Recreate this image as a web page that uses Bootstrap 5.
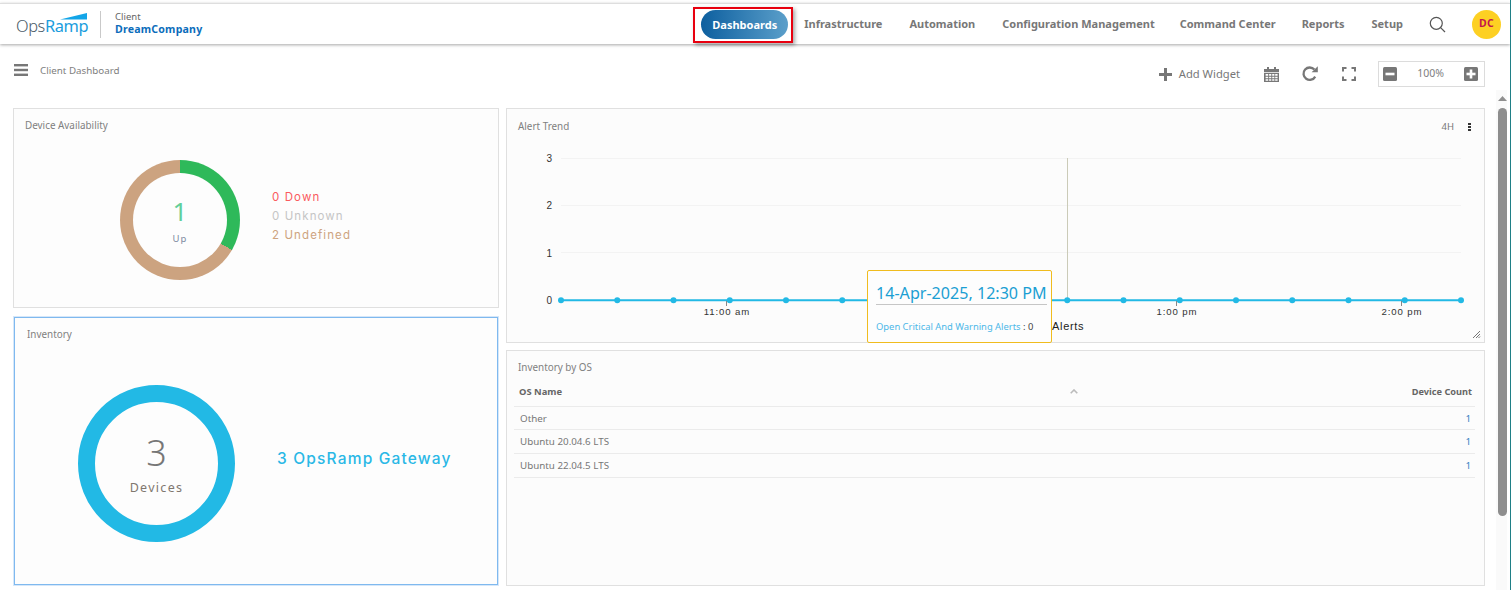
<!DOCTYPE html>
<html lang="en">
<head>
  <meta charset="UTF-8" />
  <title>Client Dashboard</title>
  <link href="https://cdn.jsdelivr.net/npm/bootstrap@5.3.0/dist/css/bootstrap.min.css" rel="stylesheet" />
  <style>
    html, body { height: 100%; }
    body {
      overflow: hidden;
      background: #fff;
      font-family: "Noto Sans", sans-serif;
      color: #777;
      border-right: 1px solid #1f7f86;
    }
    .top-bar {
      height: 41px;
      margin-top: 3px;
      padding: 0 9px 0 16px;
      background: #fff;
      border-top: 1px solid #dedede;
      box-shadow: 0 1px 3px rgba(0,0,0,.35);
      position: relative;
      z-index: 2;
    }
    .brand-name { font-size: 16.4px; line-height: 1; font-weight: 300; color: #4b5b69; letter-spacing: -.4px; margin-top: 5px; }
    .brand-name span { color: #1a9ddd; font-weight: 400; }
    .brand-box { position: relative; width: 72px; }
    .brand-wedge { position: absolute; left: 44px; top: 0; }
    .client-box { margin-left: 12px; padding-left: 14px; border-left: 1px solid #c9c9c9; height: 27px; line-height: 12px; }
    .client-label { font-size: 9.5px; color: #666; }
    .client-name { font-size: 10.6px; font-weight: 700; color: #0b6dbb; letter-spacing: .2px; }
    .main-menu { font-size: 11px; font-weight: 700; color: #777; }
    .menu-link { color: #777; text-decoration: none; }
    .menu-active {
      outline: 2px solid #e8000f;
      box-shadow: 2px 2px 4px 2px rgba(0,0,0,.35);
      padding: 1px 3px 2px 6px;
      margin: 1px 13px 0 0;
      background: #fff;
    }
    .menu-pill {
      display: block;
      width: 87px;
      height: 29px;
      line-height: 29px;
      text-align: center;
      text-decoration: none;
      color: #fff;
      border-radius: 15px;
      background: linear-gradient(90deg, #0d5f9f, #5b9fca);
    }
    .avatar {
      width: 29px; height: 29px;
      border-radius: 50%;
      background: #fdd023;
      color: #c2174c;
      font-size: 10.5px;
      font-weight: 700;
      letter-spacing: .3px;
    }
    .tool-bar { height: 64px; padding: 0 25px 0 14px; }
    .page-name { font-size: 9.8px; color: #808080; margin-left: 12px; }
    .hamburger { margin-top: -3px; }
    .tools-left { margin-top: -10px; }
    .tools-right { margin-top: -4px; }
    .add-label { font-size: 11.2px; color: #777; margin-left: 7px; margin-right: 24px; }
    .zoom-box { width: 107px; height: 26px; border: 1px solid #dcdcdc; padding: 0 6px 0 4px; font-size: 10.5px; color: #808080; }
    .dash-area { height: 482px; padding-left: 13px; }
    .col-left { width: 486px; }
    .col-right { width: 979px; margin-left: 7px; }
    .panel {
      background: #fdfdfd;
      border: 1px solid #e0e0e0;
      border-radius: 0;
      flex: none;
    }
    .panel-title { font-size: 9.9px; color: #808080; line-height: 13px; }
    .panel-avail { height: 200px; padding: 10px 11px 0; }
    .panel-inv {
      height: 268px;
      margin: 9px 1px 0;
      padding: 10px 12px 0;
      border-color: #7fb9ef;
      box-shadow: 0 0 0 1px #d6e7f9;
    }
    .panel-trend { height: 235px; padding: 11px 11px 0; background: #fcfcfc; }
    .panel-os { height: 236px; margin-top: 7px; padding: 10px 9px 0 7px; background: #fcfcfc; }
    .donut-small {
      width: 120px; height: 120px;
      border-radius: 50%;
      background: conic-gradient(#2eb95a 0 120deg, #cca380 120deg 360deg);
      margin: 28px 32px 0 95px;
    }
    .donut-hole {
      width: 94px; height: 94px;
      border-radius: 50%;
      background: #fdfdfd;
    }
    .up-num { font-size: 26px; line-height: 28px; color: #62cf9a; font-weight: 400; margin-top: 2px; }
    .up-label { font-size: 9.5px; color: #7c8aa0; letter-spacing: 1px; margin-top: 8px; line-height: 12px; }
    .legend-list { font-size: 11.5px; line-height: 19px; letter-spacing: 1.1px; margin-top: 20px; font-family: Inter, sans-serif; }
    .legend-down { color: #fa5a5e; }
    .legend-unknown { color: #c5c5c5; }
    .legend-undefined { color: #cda47f; }
    .donut-big {
      width: 157px; height: 157px;
      border-radius: 50%;
      border: 17px solid #22b9e5;
      margin: 44px 42px 0 51px;
    }
    .big-num { font-size: 36px; line-height: 40px; color: #777; font-weight: 300; margin-top: 2px; }
    .big-label { font-size: 12.5px; color: #80776f; letter-spacing: 1.3px; line-height: 16px; margin-top: 7px; }
    .gateway-label { font-size: 15.5px; color: #2ab8e6; letter-spacing: 1.18px; font-weight: 500; margin-top: 35px; font-family: Inter, sans-serif; }
    .range-label { font-size: 9.5px; line-height: 13px; color: #777; margin-right: 14px; }
    .trend-chart { display: block; flex: none; margin: 17px 0 0 -11px; }
    .chart-text { font-family: "Liberation Sans", sans-serif; font-size: 10px; fill: #333; }
    .chart-time { font-size: 9.6px; letter-spacing: .9px; text-anchor: middle; }
    .chart-series { font-family: "Liberation Sans", sans-serif; font-size: 11px; fill: #222; letter-spacing: .7px; }
    .trend-tip {
      position: absolute;
      left: 360px; top: 161px;
      width: 185px; height: 73px;
      background: #fdfdfd;
      border: 1px solid #f0bc1e;
      border-radius: 2px;
      padding: 11px 4px 0 8px;
    }
    .tip-date { font-size: 16.1px; line-height: 22px; color: #1b9fd3; border-bottom: 1px solid #c6c6c6; white-space: nowrap; }
    .tip-line { font-size: 9.4px; color: #4db8e8; margin-top: 15px; line-height: 13px; white-space: nowrap; }
    .tip-line span { color: #444; }
    .os-table { margin: 0; --bs-table-bg: transparent; --bs-table-border-color: #ebebeb; }
    .os-table th { font-size: 9.4px; font-weight: 700; color: #666; padding: 8px 5px 8px 5px; line-height: 13px; height: 30px; }
    .os-table td { font-size: 9.8px; color: #777; padding: 5px 4px 4.8px 6px; line-height: 13px; }
    .os-table .count-cell { color: #3b82c4; text-align: right; padding-right: 4px; }
    .os-table .count-head { text-align: right; padding-right: 3px; font-size: 9.2px; }
    .os-title { padding-left: 4px; margin-bottom: 2px; }
    .os-caret { margin-left: 506px; }
    .scroll-rail { width: 11px; margin-left: 11px; height: 500px; margin-top: -18px; background: #fafafa; }
    .scroll-up { margin: 6px 0 0 2px; display: block; }
    .scroll-thumb { width: 9px; height: 408px; margin: 7px 0 0 2px; background: #8e8e8e; border-radius: 5px; }
  </style>
</head>
<body class="d-flex flex-column">
  <header class="top-bar d-flex align-items-center justify-content-between">
    <div class="d-flex align-items-center">
      <div class="brand-box">
        <svg class="brand-wedge" width="27" height="8" viewBox="0 0 27 8"><polygon points="0,6.500 27,0 27,6.500" fill="#12a5e8"/></svg>
        <div class="brand-name">Ops<span>Ramp</span></div>
      </div>
      <div class="client-box">
        <div class="client-label">Client</div>
        <div class="client-name">DreamCompany</div>
      </div>
    </div>
    <nav class="main-menu d-flex align-items-center">
      <div class="menu-active"><a class="menu-pill" href="#">Dashboards</a></div>
      <a class="menu-link" style="margin-right:27px" href="#">Infrastructure</a>
      <a class="menu-link" style="margin-right:27px" href="#">Automation</a>
      <a class="menu-link" style="margin-right:25px" href="#">Configuration Management</a>
      <a class="menu-link" style="margin-right:26px" href="#">Command Center</a>
      <a class="menu-link" style="margin-right:27px" href="#">Reports</a>
      <a class="menu-link" style="margin-right:26px" href="#">Setup</a>
      <svg width="17" height="17" viewBox="0 0 17 17" style="margin-right:26px" fill="none" stroke="#555" stroke-width="1.2"><circle cx="7.3" cy="7.3" r="6"/><path d="M11.6 11.6 16 16"/></svg>
      <div class="avatar d-flex align-items-center justify-content-center">DC</div>
    </nav>
  </header>

  <div class="tool-bar d-flex align-items-center justify-content-between">
    <div class="tools-left d-flex align-items-center">
      <svg class="hamburger" width="14" height="12" viewBox="0 0 14 12" fill="#777"><rect width="14" height="2.4"/><rect y="4.8" width="14" height="2.4"/><rect y="9.6" width="14" height="2.4"/></svg>
      <span class="page-name">Client Dashboard</span>
    </div>
    <div class="tools-right d-flex align-items-center">
      <svg width="13" height="13" viewBox="0 0 13 13" fill="#777"><rect x="5" width="3" height="13"/><rect y="5" width="13" height="3"/></svg>
      <span class="add-label">Add Widget</span>
      <svg width="15" height="15" viewBox="0 0 15 15" fill="#777" style="margin-right:23px"><rect x="3" y="0" width="2" height="3.5"/><rect x="10" y="0" width="2" height="3.5"/><path d="M0 2h15v3H0z"/><path fill-rule="evenodd" d="M0 5.7h15V15H0zM1.6 7v1.7h2.6V7zm3.5 0v1.7h2.2V7zm3.1 0v1.7h2.2V7zm3 0v1.7h2.4V7zM1.6 9.7v1.6h2.6V9.7zm3.5 0v1.6h2.2V9.7zm3.1 0v1.6h2.2V9.7zm3 0v1.6h2.4V9.7zM1.6 12.2v1.5h2.6v-1.5zm3.5 0v1.5h2.2v-1.5zm3.1 0v1.5h2.2v-1.5zm3 0v1.5h2.4v-1.5z"/></svg>
      <svg width="16" height="16" viewBox="0 0 16 16" fill="none" style="margin-right:24px"><path d="M13.2 10.6A6.2 6.2 0 1 1 12.4 3.6" stroke="#777" stroke-width="2.3"/><polygon points="9.6,6.2 15.8,6.2 15.8,0.2" fill="#777"/></svg>
      <svg width="14" height="14" viewBox="0 0 14 14" fill="none" stroke="#777" stroke-width="2" style="margin-right:22px"><path d="M1 4.5V1h3.5M9.500 1H13v3.500M13 9.500V13H9.500M4.500 13H1V9.500"/></svg>
      <div class="zoom-box d-flex align-items-center justify-content-between">
        <svg width="14" height="14" viewBox="0 0 14 14"><rect width="14" height="14" rx="1.5" fill="#777"/><rect x="2.500" y="5.700" width="9" height="2.600" fill="#fff"/></svg>
        <span>100%</span>
        <svg width="14" height="14" viewBox="0 0 14 14"><rect width="14" height="14" rx="1.5" fill="#777"/><rect x="2.500" y="5.700" width="9" height="2.600" fill="#fff"/><rect x="5.700" y="2.500" width="2.600" height="9" fill="#fff"/></svg>
      </div>
    </div>
  </div>

  <main class="dash-area d-flex">
    <div class="col-left d-flex flex-column">
      <section class="card panel panel-avail">
        <div class="panel-title">Device Availability</div>
        <div class="d-flex">
          <div class="donut-small d-flex align-items-center justify-content-center">
            <div class="donut-hole d-flex flex-column align-items-center justify-content-center">
              <div class="up-num">1</div>
              <div class="up-label">Up</div>
            </div>
          </div>
          <div class="legend-list d-flex flex-column justify-content-center">
            <div class="legend-down">0 Down</div>
            <div class="legend-unknown">0 Unknown</div>
            <div class="legend-undefined">2 Undefined</div>
          </div>
        </div>
      </section>
      <section class="card panel panel-inv">
        <div class="panel-title">Inventory</div>
        <div class="d-flex">
          <div class="donut-big d-flex flex-column align-items-center justify-content-center">
            <div class="big-num">3</div>
            <div class="big-label">Devices</div>
          </div>
          <div class="gateway-label d-flex align-items-center">3 OpsRamp Gateway</div>
        </div>
      </section>
    </div>

    <div class="col-right d-flex flex-column">
      <section class="card panel panel-trend position-relative">
        <div class="d-flex justify-content-between align-items-start">
          <div class="panel-title">Alert Trend</div>
          <div class="d-flex align-items-center">
            <span class="range-label">4H</span>
            <svg width="3" height="8" viewBox="0 0 3 8" fill="#333" style="margin-right:2px"><rect width="3" height="2"/><rect y="3" width="3" height="2"/><rect y="6" width="3" height="2"/></svg>
          </div>
        </div>
        <svg class="trend-chart" width="977" height="192" viewBox="507 150 977 192">
          <g stroke="#f3f3f3"><path d="M561 158.500H1461M561 205.500H1461M561 252.500H1461"/></g>
          <path d="M1067.500 158V300" stroke="#cbcbb8"/>
          <g class="chart-text" text-anchor="end">
            <text x="552" y="162">3</text><text x="552" y="209">2</text><text x="552" y="257">1</text><text x="552" y="304">0</text>
          </g>
          <path d="M561 300.300H1461" stroke="#22b9e5" stroke-width="2"/>
          <g fill="#22b9e5" id="dots"></g>
          <g stroke="#888"><path d="M726.500 301v5M1176.500 301v5M1401.500 301v5"/></g>
          <text class="chart-text chart-time" x="727" y="315">11:00 am</text>
          <text class="chart-text chart-time" x="1177" y="315">1:00 pm</text>
          <text class="chart-text chart-time" x="1402" y="315">2:00 pm</text>
          <text class="chart-series" x="1052" y="330">Alerts</text>
          <g stroke="#777"><path d="M1473 338l7-7M1476 338l4-4M1478.500 338l1.500-1.500"/></g>
        </svg>
        <div class="trend-tip">
          <div class="tip-date">14-Apr-2025, 12:30 PM</div>
          <div class="tip-line">Open Critical And Warning Alerts <span>: 0</span></div>
        </div>
      </section>
      <section class="card panel panel-os">
        <div class="panel-title os-title">Inventory by OS</div>
        <table class="table os-table">
          <thead>
            <tr>
              <th>OS Name <svg class="os-caret" width="8" height="5" viewBox="0 0 8 5" fill="none" stroke="#bbb" stroke-width="1.6"><path d="M.7 4.300 4 1l3.300 3.300"/></svg></th>
              <th class="count-head">Device Count</th>
            </tr>
          </thead>
          <tbody>
            <tr><td>Other</td><td class="count-cell">1</td></tr>
            <tr><td>Ubuntu 20.04.6 LTS</td><td class="count-cell">1</td></tr>
            <tr><td>Ubuntu 22.04.5 LTS</td><td class="count-cell">1</td></tr>
          </tbody>
        </table>
      </section>
    </div>

    <div class="scroll-rail">
      <svg class="scroll-up" width="9" height="5" viewBox="0 0 9 5" fill="#8e8e8e"><polygon points="4.500,0 9,5 0,5"/></svg>
      <div class="scroll-thumb"></div>
    </div>
  </main>

  <script src="https://cdn.jsdelivr.net/npm/bootstrap@5.3.0/dist/js/bootstrap.bundle.min.js"></script>
  <script>
    // points every 15 min on the trend line
    const dots = document.getElementById("dots");
    for (let i = 0; i <= 16; i++) {
      const c = document.createElementNS("http://www.w3.org/2000/svg", "circle");
      c.setAttribute("cx", 561 + i * 56.25);
      c.setAttribute("cy", 300.3);
      c.setAttribute("r", 3);
      dots.appendChild(c);
    }
  </script>
</body>
</html>
